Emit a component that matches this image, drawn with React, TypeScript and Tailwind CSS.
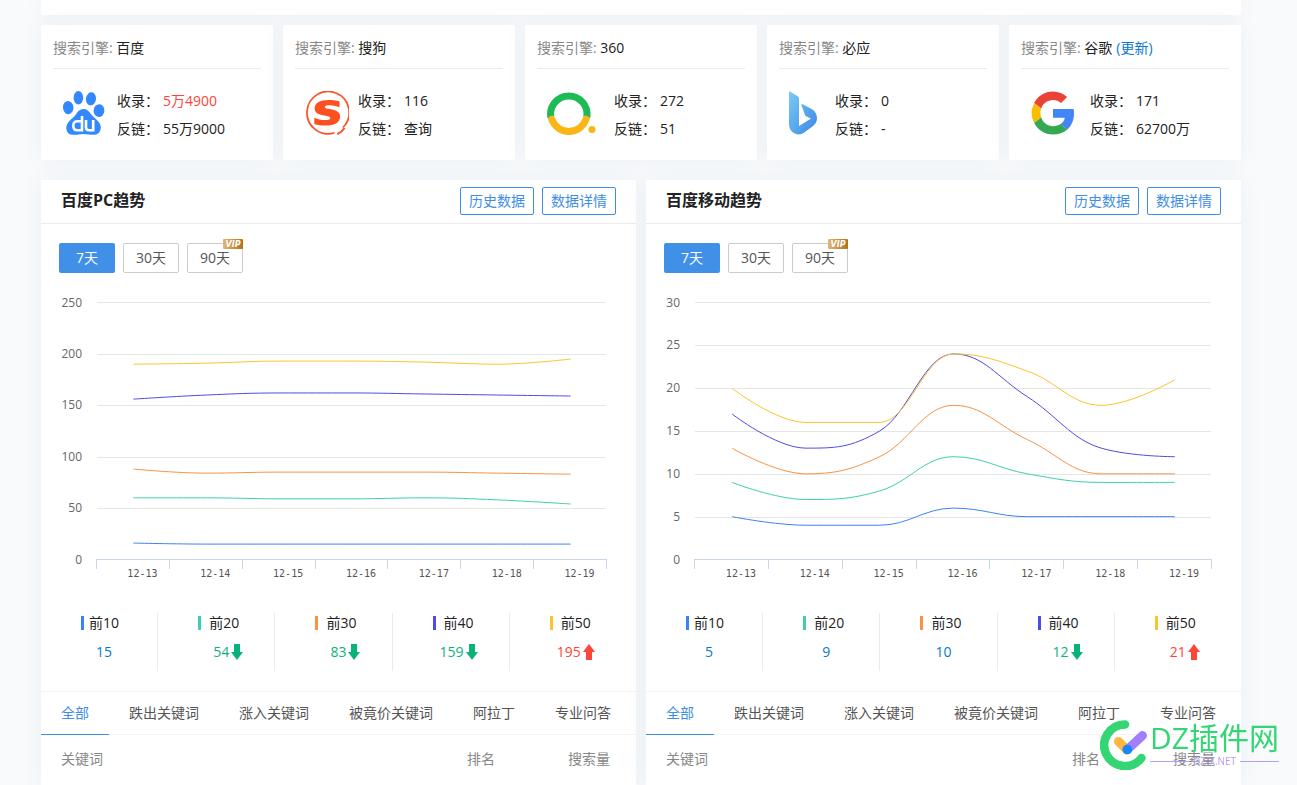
import type { ReactNode } from "react";

const DATES = ["12-13", "12-14", "12-15", "12-16", "12-17", "12-18", "12-19"];

const COLORS = ["#3b82f6", "#3ecfae", "#f79346", "#4f4be8", "#fbc42d"];

const DOTS = ["bg-[#3b82f6]", "bg-[#3ecfae]", "bg-[#f79346]", "bg-[#4f4be8]", "bg-[#fbc42d]"];

const TABS = ["全部", "跌出关键词", "涨入关键词", "被竟价关键词", "阿拉丁", "专业问答"];

type Stat = { label: string; value: number; trend?: "up" | "down" };

type Trend = {
  id: string;
  title: string;
  max: number;
  step: number;
  left: number;
  right: number;
  series: number[][];
  stats: Stat[];
};

const TRENDS: Trend[] = [
  {
    id: "pc",
    title: "百度PC趋势",
    max: 250,
    step: 50,
    left: 56,
    right: 566,
    series: [
      [16, 15, 15, 15, 15, 15, 15],
      [60, 60, 59, 59, 60, 58, 54],
      [88, 84, 85, 85, 85, 84, 83],
      [156, 160, 162, 162, 161, 160, 159],
      [190, 191, 193, 193, 192, 190, 195],
    ],
    stats: [
      { label: "前10", value: 15 },
      { label: "前20", value: 54, trend: "down" },
      { label: "前30", value: 83, trend: "down" },
      { label: "前40", value: 159, trend: "down" },
      { label: "前50", value: 195, trend: "up" },
    ],
  },
  {
    id: "mobile",
    title: "百度移动趋势",
    max: 30,
    step: 5,
    left: 49,
    right: 566,
    series: [
      [5, 4, 4, 6, 5, 5, 5],
      [9, 7, 8, 12, 10, 9, 9],
      [13, 10, 12, 18, 14, 10, 10],
      [17, 13, 15, 24, 19, 13, 12],
      [20, 16, 16, 24, 22, 18, 21],
    ],
    stats: [
      { label: "前10", value: 5 },
      { label: "前20", value: 9 },
      { label: "前30", value: 10 },
      { label: "前40", value: 12, trend: "down" },
      { label: "前50", value: 21, trend: "up" },
    ],
  },
];

function BaiduIcon() {
  return (
    <svg width="42" height="44" viewBox="0 0 42 44" fill="#3388ff">
      <ellipse cx="5.2" cy="16.6" rx="5.2" ry="6.6" transform="rotate(-6 5.2 16.6)" />
      <ellipse cx="15.4" cy="6.8" rx="4.8" ry="6.8" />
      <ellipse cx="28" cy="7.8" rx="5" ry="6.6" transform="rotate(8 28 7.8)" />
      <ellipse cx="36" cy="19.6" rx="5.4" ry="6.4" transform="rotate(4 36 19.6)" />
      <path d="M20.5 18c-3.6 0-5.6 2.2-7.4 5.2-2.4 3.8-6.4 5.4-8.6 9.2-2.6 4.4-1 11.2 5.2 11.4 4 .2 7-.8 10.8-.8s6.600.9 10.600.8c6.400-.2 8.200-7.200 5.500-11.600-2.200-3.600-6.200-5.600-8.700-9.200-2-2.900-3.900-5-7.400-5z" />
      <g fill="none" stroke="#fff" strokeWidth="2.600">
        <path d="M19 25v14.300h-4.600c-2.600 0-4.100-1.700-4.100-4.600s1.500-4.500 4.100-4.500H19" />
        <path d="M23 29v7.200c0 2.100 1 3.100 3 3.100h4.200V29" />
      </g>
    </svg>
  );
}

function SogouIcon() {
  return (
    <svg width="44" height="44" viewBox="0 0 44 44" fill="none">
      <path d="M38 36.500A21.100 21.100 0 1 0 29.500 41.700" stroke="#fd5021" strokeWidth="1.700" />
      <path d="M32.300 43c3-1.200 5.600-3.300 7.300-6" stroke="#fd5021" strokeWidth="1.900" />
      <path
        d="M34.500 10.200v6c-3-1.200-6.700-2-10-2-3.200 0-4.700.6-4.700 1.700 0 1.300 2 1.600 6 2.400 6.200 1.200 9.300 3 9.300 7.200 0 6.400-6.200 9.100-14.400 9.100-4 0-8-.5-11.400-1.600v-6.200c3.400 1.500 7.200 2.300 10.700 2.300 3.500 0 5.300-.6 5.300-1.900 0-1.500-2.100-1.800-6.200-2.600-6.200-1.200-9.400-3-9.400-7.100 0-5.700 5.200-8.600 13.800-8.600 3.800 0 7.800.4 11 1.300z"
        fill="#fd5021"
      />
    </svg>
  );
}

function So360Icon() {
  return (
    <svg width="49" height="44" viewBox="0 0 49 44" fill="none" strokeWidth="7">
      <path d="M3.900 26.500A18.200 18.200 0 1 1 39.700 26.500" stroke="#1dbb55" />
      <path d="M4.700 28.200A18.200 18.200 0 0 0 39.100 28.200" stroke="#f9b615" strokeLinecap="round" />
      <circle cx="45" cy="38.500" r="3.600" fill="#f9b615" />
    </svg>
  );
}

function BingIcon() {
  return (
    <svg width="28" height="44" viewBox="0 0 28 44">
      <defs>
        <linearGradient id="bing" x1="0" y1="0" x2="1" y2="1">
          <stop offset="0" stopColor="#7acbf5" />
          <stop offset="1" stopColor="#3c87e5" />
        </linearGradient>
      </defs>
      <path
        fill="url(#bing)"
        d="M.5.300 9 5.400c.8.500 1 1.100 1 2V35l12-7.600-4.800-2.200c-.6-.3-1-.7-1.200-1.300L12.500 14.400c-.3-.9.200-1.500 1.200-1.100l9.300 5c3 1.700 5 5.300 5 9 0 3.300-1.500 6-4.300 7.900L15.300 41.500c-3.300 2.300-7.300 2.500-10.500.6C1.900 40.300 0 37 0 33.500V1C0 .4.200.1.500.300z"
      />
    </svg>
  );
}

function GoogleIcon() {
  return (
    <svg width="44" height="44" viewBox="3 2 42 44">
      <path fill="#ea4335" d="M24 10.900c3.100 0 5.900 1.100 8.100 3.100l6-6C34.400 4.500 29.500 2.400 24 2.400c-8.200 0-15.300 4.700-18.800 11.500l7 5.500C13.900 14.400 18.500 10.900 24 10.900z" />
      <path fill="#4285f4" d="M45 24.500c0-1.600-.1-3-.400-4.400H24v8.600h11.800c-.5 2.700-2.100 5-4.400 6.500l7 5.400C42.500 36.800 45 31.100 45 24.500z" />
      <path fill="#fbbc05" d="M12.200 28.600a13.200 13.200 0 0 1 0-9.200l-7-5.500a21.700 21.700 0 0 0 0 20.200z" />
      <path fill="#34a853" d="M24 45.600c5.700 0 10.500-1.900 14.300-5.100l-6.900-5.400c-2 1.300-4.400 2.100-7.400 2.100-5.500 0-10.100-3.500-11.800-8.600l-7 5.500C8.700 40.900 15.800 45.600 24 45.600z" />
    </svg>
  );
}

type Engine = {
  name: string;
  icon: ReactNode;
  slot: string;
  indexed: string;
  links: string;
  hot?: boolean;
  refresh?: boolean;
};

const ENGINES: Engine[] = [
  { name: "百度", icon: <BaiduIcon />, slot: "w-[54px]", indexed: "5万4900", links: "55万9000", hot: true },
  { name: "搜狗", icon: <SogouIcon />, slot: "w-[53px]", indexed: "116", links: "查询" },
  { name: "360", icon: <So360Icon />, slot: "w-[67px]", indexed: "272", links: "51" },
  { name: "必应", icon: <BingIcon />, slot: "w-[46px]", indexed: "0", links: "-" },
  { name: "谷歌", icon: <GoogleIcon />, slot: "w-[59px]", indexed: "171", links: "62700万", refresh: true },
];

function EngineCard({ engine }: { engine: Engine }) {
  return (
    <div className="min-w-0 rounded-xs bg-white px-3 pb-[17px] shadow-[0_0_24px_rgba(0,80,100,0.05)]">
      <h2 className="h-11 border-b border-[#ebebeb] leading-[46px] text-[#888]">
        搜索引擎: <span className="text-[#222]">{engine.name}</span>
        {engine.refresh && (
          <a href="#refresh" className="ml-1 text-[#0a78cc]">
            (更新)
          </a>
        )}
      </h2>
      <div className="flex pt-[18px] pl-[10px]">
        <div className={`shrink-0 pt-1 ${engine.slot}`}>{engine.icon}</div>
        <dl className="grid grid-cols-[46px_auto] leading-7">
          <dt>收录：</dt>
          <dd className={engine.hot ? "text-[#ff4438]" : ""}>{engine.indexed}</dd>
          <dt>反链：</dt>
          <dd>{engine.links}</dd>
        </dl>
      </div>
    </div>
  );
}

// same smoothing as the Highcharts spline series
function spline(pts: [number, number][]) {
  const k = 1.5;
  let d = `M${pts[0][0]} ${pts[0][1]}`;
  let [outX, outY] = pts[0];
  for (let i = 1; i < pts.length; i++) {
    const [x, y] = pts[i];
    let inX = x;
    let inY = y;
    let nextX = x;
    let nextY = y;
    if (i < pts.length - 1) {
      const [px, py] = pts[i - 1];
      const [nx, ny] = pts[i + 1];
      inX = (k * x + px) / (k + 1);
      inY = (k * y + py) / (k + 1);
      nextX = (k * x + nx) / (k + 1);
      nextY = (k * y + ny) / (k + 1);
      const fix = ((nextY - inY) * (nextX - x)) / (nextX - inX) + y - nextY;
      inY += fix;
      nextY += fix;
      if (inY > py && inY > y) {
        inY = Math.max(py, y);
        nextY = 2 * y - inY;
      } else if (inY < py && inY < y) {
        inY = Math.min(py, y);
        nextY = 2 * y - inY;
      }
      if (nextY > ny && nextY > y) {
        nextY = Math.max(ny, y);
        inY = 2 * y - nextY;
      } else if (nextY < ny && nextY < y) {
        nextY = Math.min(ny, y);
        inY = 2 * y - nextY;
      }
    }
    d += `C${outX} ${outY} ${inX} ${inY} ${x} ${y}`;
    outX = nextX;
    outY = nextY;
  }
  return d;
}

const TOP = 29.5;
const BOTTOM = 286.5;

function TrendChart({ trend }: { trend: Trend }) {
  const { left, right, max, step } = trend;
  const band = (right - left) / DATES.length;
  const yOf = (v: number) => BOTTOM - (v / max) * (BOTTOM - TOP);
  const ticks = Array.from({ length: max / step + 1 }, (_, i) => i * step);

  return (
    <svg viewBox="0 0 595 340" className="w-full" role="img" aria-label={trend.title}>
      {ticks.map((v) => (
        <g key={v}>
          {v > 0 && (
            <path d={`M${left} ${Math.round(yOf(v) - 0.1) + 0.5}H${right - 1}`} stroke="#e6e6e6" />
          )}
          <text x={left - 15} y={yOf(v) + 4} textAnchor="end" fontSize="12" fill="#666">
            {v}
          </text>
        </g>
      ))}
      <path d={`M${left - 1} ${BOTTOM}H${right}`} stroke="#ccd6eb" />
      {Array.from({ length: DATES.length + 1 }, (_, i) => {
        const x = Math.round(left + i * band) - 0.5;
        return <path key={i} d={`M${x} ${BOTTOM}v9.500`} stroke="#ccd6eb" />;
      })}
      {DATES.map((date, i) => (
        <text
          key={date}
          x={left + (i + 0.5) * band + 9}
          y="304"
          textAnchor="middle"
          fontSize="10"
          fill="#555"
          className="font-['DejaVu_Sans_Mono',monospace]"
        >
          {date}
        </text>
      ))}
      {trend.series.map((values, i) => (
        <path
          key={COLORS[i]}
          d={spline(values.map((v, j) => [left + (j + 0.5) * band, yOf(v)]))}
          fill="none"
          stroke={COLORS[i]}
          strokeWidth="1"
        />
      ))}
    </svg>
  );
}

function Arrow({ up }: { up?: boolean }) {
  return (
    <svg width="12" height="16" viewBox="0 0 12 16" className={`ml-[2px] ${up ? "" : "rotate-180"}`} fill="currentColor">
      <path d="M6 0 12 8H9v8H3V8H0z" />
    </svg>
  );
}

function StatCell({ stat, index }: { stat: Stat; index: number }) {
  const color =
    stat.trend === "up" ? "text-[#ff4438]" : stat.trend === "down" ? "text-[#0ab27b]" : "text-[#0a78cc]";

  return (
    <div className="h-[58px] flex-1 border-r border-[#ebebeb] leading-5 last:border-r-0">
      <div className="flex items-center pl-10">
        <i className={`h-[14px] w-[3px] ${DOTS[index]}`} />
        <span className={index === 0 ? "ml-[5px]" : "ml-2"}>{stat.label}</span>
      </div>
      <div className={`mt-[9px] flex items-center ${color}`}>
        <div className="flex w-[71px] justify-end">
          <span className="min-w-4 text-center">{stat.value}</span>
        </div>
        {stat.trend && <Arrow up={stat.trend === "up"} />}
      </div>
    </div>
  );
}

function VipBadge() {
  return (
    <svg width="20" height="10" viewBox="0 0 20 10" className="absolute -top-[5px] -right-px" aria-label="VIP">
      <defs>
        <linearGradient id="vip" x1="0" x2="1">
          <stop offset="0" stopColor="#e5b476" />
          <stop offset="1" stopColor="#b37217" />
        </linearGradient>
      </defs>
      <rect width="20" height="10" rx="1" fill="url(#vip)" />
      <text
        x="10"
        y="8"
        textAnchor="middle"
        fontSize="8"
        fontWeight="700"
        fontStyle="italic"
        fill="#fff"
        className="font-['DejaVu_Sans',sans-serif]"
      >
        VIP
      </text>
    </svg>
  );
}

function TrendPanel({ trend }: { trend: Trend }) {
  return (
    <section className="flex min-w-0 flex-col bg-white shadow-[0_0_24px_rgba(0,80,100,0.05)]">
      <header className="flex h-11 items-center border-b border-[#ebebeb] px-5 pb-px">
        <h2 className="flex-1 pb-[2px] text-base font-bold">{trend.title}</h2>
        <div className="flex gap-2 text-[#3e8ee5]">
          {["历史数据", "数据详情"].map((label) => (
            <button key={label} className="h-7 rounded-xs border border-[#3e8ee5] px-2 leading-[26px]">
              {label}
            </button>
          ))}
        </div>
      </header>

      <div className="flex gap-2 pt-[19px] pl-[18px] text-[#555]">
        <button className="h-[30px] w-14 rounded-xs bg-[#4190e8] text-white">7天</button>
        <button className="h-[30px] w-14 rounded-xs border border-[#ccc]">30天</button>
        <button className="relative h-[30px] w-14 rounded-xs border border-[#ccc]">
          90天
          <VipBadge />
        </button>
      </div>

      <TrendChart trend={trend} />

      <div className="flex pr-[10px] pb-5">
        {trend.stats.map((stat, i) => (
          <StatCell key={stat.label} stat={stat} index={i} />
        ))}
      </div>

      <nav className="flex h-11 border-t border-[#f3f3f3] text-[#555] shadow-[inset_0_-1px_0_#f3f3f3]">
        {TABS.map((tab, i) => (
          <a
            key={tab}
            href={`#${trend.id}-${i}`}
            className={`px-5 leading-[42px] whitespace-nowrap ${
              i === 0 ? "text-[#3e8ee5] shadow-[inset_0_-1px_0_#3e8ee5]" : ""
            }`}
          >
            {tab}
          </a>
        ))}
      </nav>

      <table className="w-full table-fixed text-left text-[#888]">
        <thead>
          <tr className="h-12">
            <th className="pl-5 font-normal">关键词</th>
            <th className="w-[101px] font-normal">排名</th>
            <th className="w-[68px] font-normal">搜索量</th>
          </tr>
        </thead>
      </table>
    </section>
  );
}

function Watermark() {
  return (
    <div className="pointer-events-none fixed right-[18px] bottom-[15px] flex items-center gap-[3px]">
      <svg width="47" height="50" viewBox="0 0 47 50" fill="none" strokeLinecap="round">
        <path d="M25 4.500A20.800 20.800 0 1 0 41.500 38" stroke="#34d673" strokeWidth="8.500" />
        <path d="M18.500 21.500 27 30" stroke="#ffb83e" strokeWidth="9" />
        <path d="M42.500 15.500 27.500 29.500" stroke="#a17efc" strokeWidth="9" />
        <circle cx="27.300" cy="29.500" r="4.800" fill="#1686fb" />
      </svg>
      <div className="pb-1">
        <div className="text-[30px] leading-9 text-[#34d673]">DZ插件网</div>
        <div className="flex items-center gap-1 text-[10px] leading-[10px] text-[#b79cf9]">
          <i className="h-px flex-1 bg-current" />
          DZ-X.NET
          <i className="h-px flex-1 bg-current" />
        </div>
      </div>
    </div>
  );
}

export default function App() {
  return (
    <div className="flex min-h-screen flex-col overflow-hidden bg-[#f8fafc] pr-[15px] font-['Open_Sans','Noto_Sans_CJK_SC',sans-serif] text-sm text-[#222]">
      <main className="mx-auto flex w-full max-w-[1200px] flex-1 flex-col">
        <div className="h-[15px] rounded-b-xs bg-white shadow-[0_0_24px_rgba(0,80,100,0.05)]" />

        <div className="mt-[10px] grid grid-cols-5 gap-[10px]">
          {ENGINES.map((engine) => (
            <EngineCard key={engine.name} engine={engine} />
          ))}
        </div>

        <div className="mt-5 grid flex-1 grid-cols-2 gap-[10px]">
          {TRENDS.map((trend) => (
            <TrendPanel key={trend.id} trend={trend} />
          ))}
        </div>
      </main>
      <Watermark />
    </div>
  );
}
